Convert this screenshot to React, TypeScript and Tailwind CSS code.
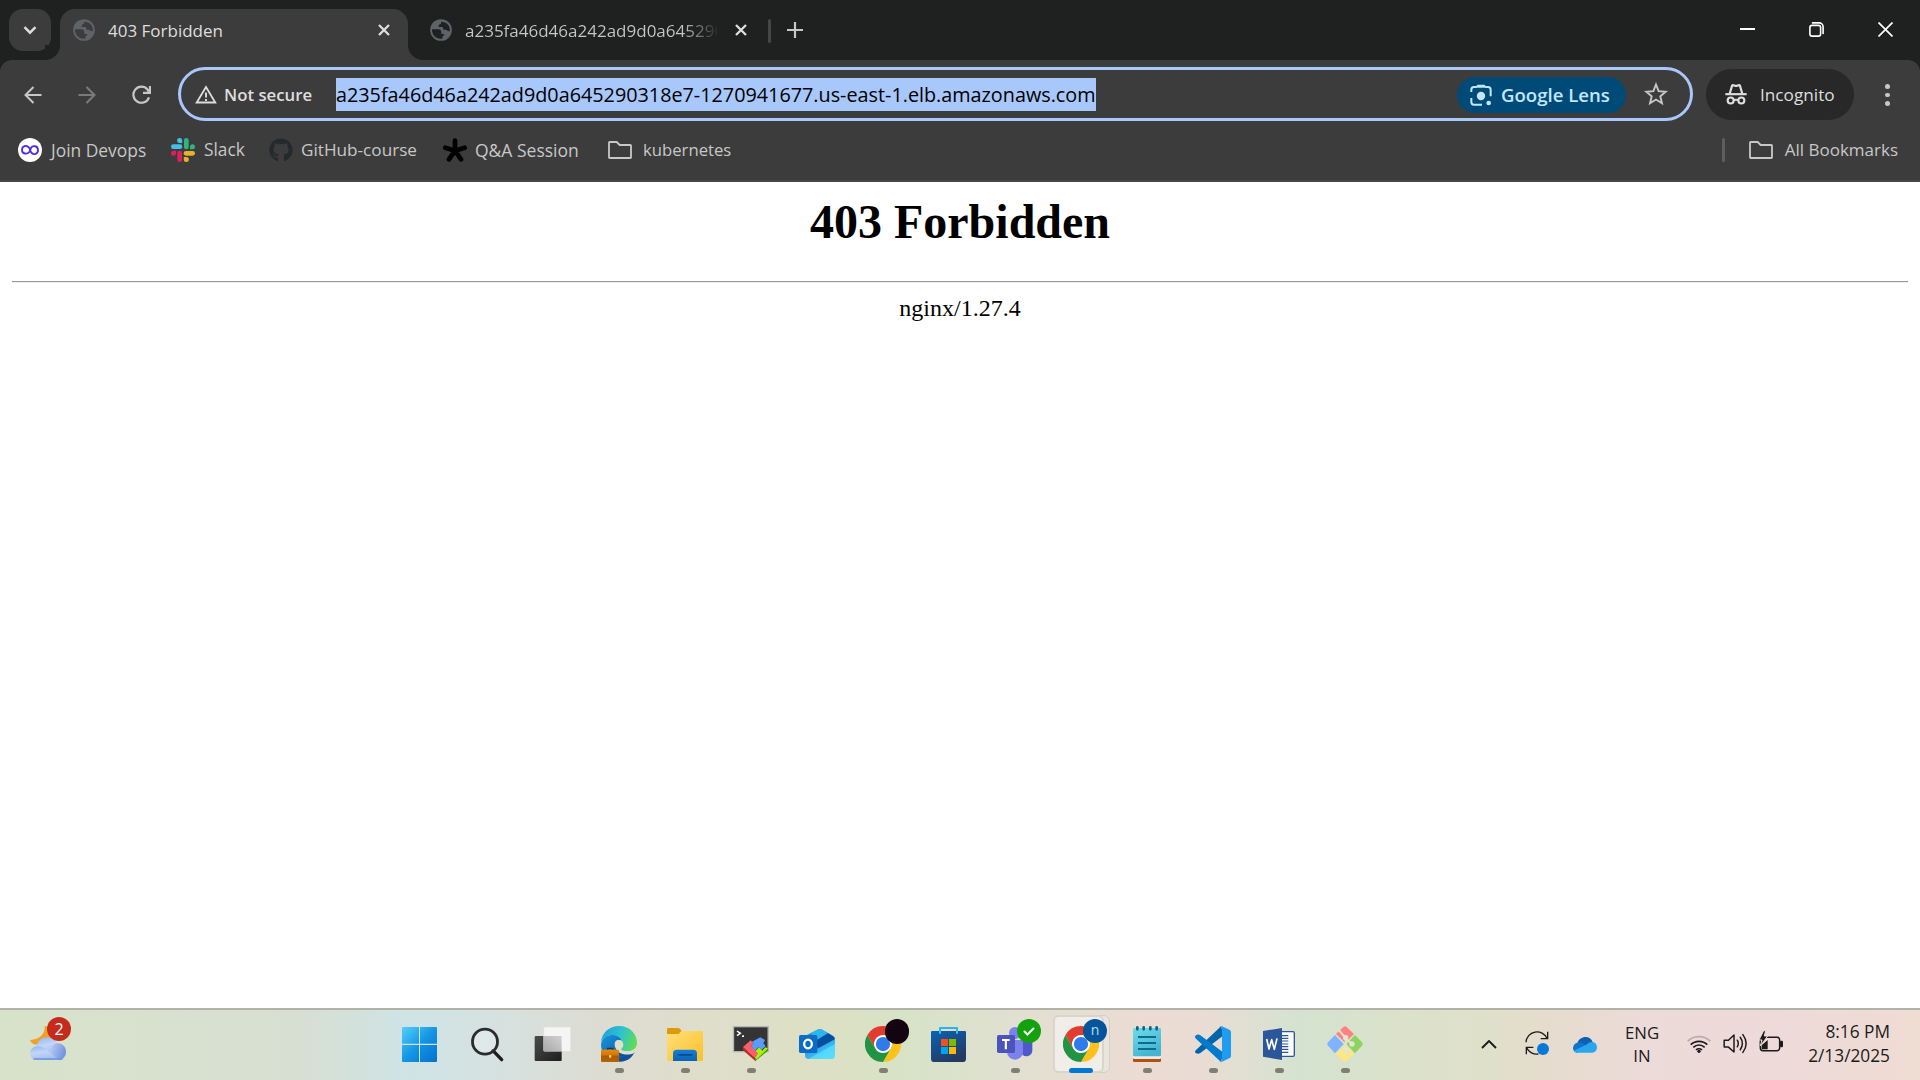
import type { ReactNode } from "react";
import { FaGithub } from "react-icons/fa";

function Chrome() {
  return (
    <svg viewBox="0 0 48 48" className="size-9">
      <circle cx="24" cy="24" r="12" fill="#fff" />
      <path fill="#e33b2e" d="M24,12H44.7812a23.9939,23.9939,0,0,0-41.5639.0029L13.6079,30l.0093-.0024A11.9852,11.9852,0,0,1,24,12Z" />
      <path fill="#fcc21b" d="M34.3913,30.0029,24.0007,48A23.994,23.994,0,0,0,44.78,12.0031H23.9989l-.0025.0093A11.985,11.985,0,0,1,34.3913,30.0029Z" />
      <path fill="#229342" d="M13.6086,30.0031,3.218,12.006A23.994,23.994,0,0,0,24.0025,48L34.3931,30.0029l-.0067-.0068a11.9852,11.9852,0,0,1-20.7778.007Z" />
      <circle cx="24" cy="24" r="9.5" fill="#2f7bea" />
    </svg>
  );
}

function Art({ children }: { children: ReactNode }) {
  return (
    <svg viewBox="0 0 108 108" className="size-9 overflow-visible">
      {children}
    </svg>
  );
}

function TaskButton({ children, running, active }: { children: ReactNode; running?: boolean; active?: boolean }) {
  return (
    <div className="relative flex h-full w-[66px] shrink-0 justify-center pt-4">
      {active && (
        <>
          <div className="absolute left-[5px] top-[5px] h-[58px] w-[57px] rounded-md border border-[#d5cfc6] bg-[#e9e4dc]" />
          <div className="absolute left-[5px] top-[5px] h-[58px] w-[51px] rounded-md border-2 border-[#d9d5cc] bg-[#f1eeea]" />
        </>
      )}
      <div className="relative size-9">{children}</div>
      {running && !active && <div className="absolute top-[58px] h-[5px] w-[9px] rounded-full bg-[#807f74]" />}
      {active && <div className="absolute top-[58px] h-[5px] w-6 rounded-full bg-[#0078d4]" />}
    </div>
  );
}

function StartIcon() {
  return (
    <Art>
      <defs>
        <linearGradient id="win" gradientUnits="userSpaceOnUse" x1="-3" y1="3" x2="102" y2="108">
          <stop offset="0" stopColor="#52d0fb" />
          <stop offset="0.5" stopColor="#1595e4" />
          <stop offset="1" stopColor="#0470cf" />
        </linearGradient>
      </defs>
      <path fill="url(#win)" d="M0 3h48v50H-3V6a3 3 0 0 1 3-3zM51 3h48a3 3 0 0 1 3 3v47H51zM-3 57h51v51H0a3 3 0 0 1-3-3zM51 57h51v48a3 3 0 0 1-3 3H51z" />
    </Art>
  );
}

function SearchIcon() {
  return (
    <Art>
      <path d="M72 74 L98 101" stroke="#1c1c1c" strokeWidth="10" strokeLinecap="round" />
      <circle cx="48" cy="47" r="37.5" fill="#ffffff" fillOpacity="0.25" stroke="#2b2b2b" strokeWidth="8.5" />
    </Art>
  );
}

function TaskViewIcon() {
  return (
    <Art>
      <defs>
        <linearGradient id="tvd" x1="0" y1="0" x2="1" y2="1">
          <stop offset="0" stopColor="#4c4c4c" />
          <stop offset="1" stopColor="#1d1d1d" />
        </linearGradient>
        <linearGradient id="tvl" x1="0" y1="1" x2="1" y2="0">
          <stop offset="0" stopColor="#a9a9a9" />
          <stop offset="1" stopColor="#d2d2d2" />
        </linearGradient>
      </defs>
      <rect x="-1" y="30" width="81" height="75" rx="3" fill="url(#tvd)" />
      <rect x="26" y="3" width="81" height="73" rx="3" fill="#f5f5f5" stroke="#dcdcdc" strokeWidth="1.5" />
      <rect x="26" y="30" width="54" height="45" fill="url(#tvl)" />
    </Art>
  );
}

function EdgeIcon() {
  return (
    <Art>
      <defs>
        <linearGradient id="e1" x1="0" y1="0.3" x2="1" y2="0.6">
          <stop offset="0" stopColor="#1fa0dc" />
          <stop offset="0.5" stopColor="#2cc3cf" />
          <stop offset="1" stopColor="#62dc55" />
        </linearGradient>
        <linearGradient id="e2" x1="0" y1="0" x2="0.8" y2="1">
          <stop offset="0" stopColor="#1a96dd" />
          <stop offset="1" stopColor="#0b58ac" />
        </linearGradient>
        <linearGradient id="e3" x1="0" y1="0" x2="0" y2="1">
          <stop offset="0" stopColor="#e78c0b" />
          <stop offset="0.45" stopColor="#d27605" />
          <stop offset="0.5" stopColor="#a95a03" />
          <stop offset="1" stopColor="#b76406" />
        </linearGradient>
      </defs>
      <path fill="#10509b" d="M54 107C36 104 24 88 30 66L48 60C51 76 73 86 101 78C95 93 77 109 54 107Z" />
      <path fill="url(#e2)" d="M0 55C2 38 16 26 34 26C52 26 63 36 62 44C48 38 40 50 42 62C44 80 54 90 70 90L40 107C16 100 0 82 0 55Z" />
      <path fill="#e0dfcf" d="M41 56C40 47 46 41 54 42C62 43 68 49 67 57C66 63 60 65 62 69C68 77 86 77 101 76L100 81C78 91 44 86 41 56Z" />
      <path fill="url(#e1)" d="M0 50C2 20 25 0 54 0C88 0 108 25 108 50C108 66 96 75 80 75C67 75 59 73 61 68C67 64 68 58 66 51C61 34 45 26 32 27C16 28 4 38 0 50Z" />
      <path d="M20 71V67h15v4" fill="none" stroke="#4b2c06" strokeWidth="4" />
      <rect x="0" y="71" width="54" height="37" rx="3" fill="url(#e3)" />
      <rect x="24" y="87" width="7" height="8" rx="2" fill="#ffd23c" />
    </Art>
  );
}

function ExplorerIcon() {
  return (
    <Art>
      <defs>
        <linearGradient id="f1" x1="0" y1="0" x2="1" y2="1">
          <stop offset="0" stopColor="#ffdf7a" />
          <stop offset="1" stopColor="#fbc02a" />
        </linearGradient>
        <linearGradient id="f2" x1="0" y1="0" x2="0" y2="1">
          <stop offset="0" stopColor="#127fdc" />
          <stop offset="1" stopColor="#0b64b4" />
        </linearGradient>
      </defs>
      <path fill="#dc9c08" d="M0 9a3 3 0 0 1 3-3h30c4 0 6 2 11 9l-6 12H0z" />
      <path fill="url(#f1)" d="M0 24h34c4 0 6-9 11-9h60a3 3 0 0 1 3 3v84a3 3 0 0 1-3 3H3a3 3 0 0 1-3-3z" />
      <path fill="url(#f2)" d="M18 105V82a11 11 0 0 1 11-11h50a11 11 0 0 1 11 11v23z" />
      <rect x="32" y="84" width="45" height="5" rx="2.5" fill="#0a4a8c" />
    </Art>
  );
}

function TerminalIcon() {
  return (
    <Art>
      <rect x="1.5" y="2" width="104" height="75" fill="#343434" stroke="#b4b7ba" strokeWidth="4" />
      <path d="M12 15l10 7-10 7" fill="none" stroke="#fff" strokeWidth="4.5" />
      <rect x="27" y="28" width="6" height="5" fill="#fff" />
      <path fill="#b8282e" d="M30 63v10l38 33v-10z" />
      <path fill="#fb5f63" d="M30 63L53 43l9 9-8 8 22 22-9 14z" />
      <path fill="#5b9bfb" d="M54 60l8-8-5-5 25-13 14 8-5 10 7 8-12 12-9-9-11 11z" />
      <path fill="#4b9a08" d="M66 95v11l39-32V64z" />
      <path fill="#a4f40a" d="M66 95l11-12-9-9 10-10 10 10 9-10 8 3-34 33z" />
    </Art>
  );
}

function OutlookIcon() {
  return (
    <Art>
      <defs>
        <linearGradient id="o1" x1="0" y1="0" x2="1" y2="1">
          <stop offset="0" stopColor="#1b86dc" />
          <stop offset="1" stopColor="#4fdcff" />
        </linearGradient>
      </defs>
      <path fill="#1a8fdb" d="M18 30L58 10a10 10 0 0 1 9 0L104 31v40H18z" />
      <path fill="#2db6ee" d="M36 21L58 10a10 10 0 0 1 9 0l19 11-33 21z" />
      <path fill="#0a4ea0" d="M50 44L88 22l17 11c4 3 3 8 0 10L58 73z" />
      <path fill="url(#o1)" d="M18 54l28 19L108 40v48a11 11 0 0 1-11 11H29a11 11 0 0 1-11-11z" />
      <path fill="#5fe1fd" fillOpacity="0.7" d="M28 99L108 54v34a11 11 0 0 1-11 11z" />
      <rect x="0" y="27" width="55" height="54" rx="5" fill="#0a6cc7" />
      <ellipse cx="27" cy="54" rx="11.5" ry="13" fill="none" stroke="#fff" strokeWidth="7" />
    </Art>
  );
}

function StoreIcon() {
  return (
    <Art>
      <defs>
        <linearGradient id="s1" x1="0" y1="0" x2="0.5" y2="1">
          <stop offset="0" stopColor="#0a63b5" />
          <stop offset="1" stopColor="#243a63" />
        </linearGradient>
      </defs>
      <path d="M27 22V6h51v16" fill="none" stroke="#27b4f2" strokeWidth="6" strokeLinejoin="round" />
      <path fill="url(#s1)" d="M3 15h99a3 3 0 0 1 3 3v80a10 10 0 0 1-10 10H10A10 10 0 0 1 0 98V18a3 3 0 0 1 3-3z" />
      <path d="M27 15v8M78 15v8" stroke="#35c3fa" strokeWidth="6" />
      <rect x="30" y="39" width="21" height="21" fill="#f25022" />
      <rect x="54" y="39" width="21" height="21" fill="#7fba00" />
      <rect x="30" y="63" width="21" height="21" fill="#00a4ef" />
      <rect x="54" y="63" width="21" height="21" fill="#ffb900" />
    </Art>
  );
}

function TeamsIcon() {
  return (
    <Art>
      <circle cx="86" cy="30" r="15" fill="#5059c9" />
      <path fill="#5059c9" d="M66 42h36a4 4 0 0 1 4 4v26a18 18 0 0 1-30 14z" />
      <circle cx="54" cy="21" r="18" fill="#7b83eb" />
      <path fill="#7b83eb" d="M30 42h43a5 5 0 0 1 5 5v30a24 24 0 0 1-48 0z" />
      <rect x="0" y="27" width="54" height="54" rx="5" fill="#4b53bc" />
      <path d="M15 42h23M26.5 42v28" stroke="#fff" strokeWidth="6.5" />
    </Art>
  );
}

function NotepadIcon() {
  return (
    <Art>
      <defs>
        <linearGradient id="n1" x1="0" y1="0" x2="0.5" y2="1">
          <stop offset="0" stopColor="#6fdcec" />
          <stop offset="1" stopColor="#44b4cf" />
        </linearGradient>
      </defs>
      <rect x="12" y="90" width="84" height="18" rx="4" fill="#b5500c" />
      <rect x="12" y="82" width="84" height="17" rx="4" fill="#eee9ea" />
      <rect x="12" y="6" width="84" height="85" rx="4" fill="url(#n1)" />
      <path d="M27 33h54M27 51h54M27 69h54" stroke="#0f6a8b" strokeWidth="5.5" />
      <path d="M25 4v6M44 4v6M64 4v6M83 4v6" stroke="#0e6486" strokeWidth="8" strokeLinecap="round" />
    </Art>
  );
}

function VSCodeIcon() {
  return (
    <Art>
      <path fill="#0065a9" d="M3 82c-4-3-4-6 0-10L78 1l8 27L16 81c-4 3-8 3-13 1z" />
      <path fill="#007acc" d="M3 28c-4 3-4 6 0 10l75 70 8-28L16 28c-4-3-8-3-13 0z" />
      <path fill="#1f9cf0" d="M81 107c-3 1-6 0-8-2 3 3 8 1 8-3V6c0-4-5-6-8-3 2-3 5-4 8-2l22 10c3 2 5 4 5 8v70c0 4-2 6-5 8z" />
    </Art>
  );
}

function WordIcon() {
  return (
    <Art>
      <rect x="50" y="17" width="50" height="74" rx="4" fill="#fff" stroke="#2b579a" strokeWidth="4" />
      <path d="M56 29h26M56 37h26M56 45h26M56 54h26M56 62h26M56 70h26M56 79h26" stroke="#2b579a" strokeWidth="3.5" />
      <path fill="#2b579a" d="M6 15L63 6v96L6 92z" />
      <path fill="none" stroke="#fff" strokeWidth="5" strokeLinejoin="round" d="M17 39l7 30 8-28 8 29 8-33" />
    </Art>
  );
}

function GitIcon() {
  return (
    <Art>
      <path fill="#ff8080" d="M49 3a7 7 0 0 1 10 0l22 21-27 26-27-26z" />
      <path fill="#80b3ff" d="M3 49L24 27l26 27-26 28L3 59a7 7 0 0 1 0-10z" />
      <path fill="#8dd35f" d="M105 49L84 27 58 54l26 28 21-23a7 7 0 0 0 0-10z" />
      <path fill="#ffe680" d="M49 105a7 7 0 0 0 10 0l22-21-27-26-27 26z" />
      <g stroke="#e3e5cf" fill="#e3e5cf" strokeWidth="6">
        <path d="M36 13l20 23M56 34v42M58 40l17 13" />
        <circle cx="56" cy="35" r="5" />
        <circle cx="56" cy="77" r="5" />
        <circle cx="75" cy="54" r="5" />
      </g>
    </Art>
  );
}

function WeatherIcon() {
  return (
    <svg viewBox="0 0 108 105" className="h-[35px] w-9">
      <defs>
        <linearGradient id="w1" x1="0" y1="0" x2="0.3" y2="1">
          <stop offset="0" stopColor="#8fb4f2" />
          <stop offset="0.5" stopColor="#c3d6f7" />
          <stop offset="1" stopColor="#a3c0f2" />
        </linearGradient>
        <linearGradient id="w2" x1="0" y1="0" x2="1" y2="0.3">
          <stop offset="0" stopColor="#cfdcf6" />
          <stop offset="1" stopColor="#7296de" />
        </linearGradient>
      </defs>
      <path fill="#f0a022" d="M44 0C46 20 34 40 0 42C4 54 16 58 28 56L64 40L56 8C52 2 48 0 44 0Z" />
      <path fill="url(#w1)" d="M20 62C22 44 36 34 52 34C68 34 80 44 84 60L70 90H30Z" />
      <path fill="url(#w2)" d="M62 70C66 56 76 52 84 52C98 52 108 63 108 77C108 92 98 102 84 102H50Z" />
      <path fill="url(#w1)" d="M0 82C0 70 10 61 22 61C36 61 42 66 54 74L86 102H21C9 102 0 94 0 82Z" />
      <path d="M12 99h84" stroke="#6f92de" strokeWidth="5" strokeLinecap="round" />
    </svg>
  );
}

function DevopsIcon() {
  return (
    <svg viewBox="0 0 72 72" className="size-6">
      <circle cx="36" cy="36" r="36" fill="#fff" />
      <path d="M29 26c-3-4-17-3-17 10s16 13 22 6l5-12c5-9 21-7 21 6s-13 14-18 10M29 26c9 1 6 20 15 20" fill="none" stroke="#4b2bf0" strokeWidth="5.5" strokeLinecap="round" />
    </svg>
  );
}

function SlackIcon() {
  return (
    <svg viewBox="0 0 72 72" className="size-6">
      <g fill="#45bfe6">
        <rect x="0" y="19" width="34" height="14" rx="7" />
        <path d="M26 0a7.5 7.5 0 0 1 7.5 7.5V15H26a7.5 7.5 0 0 1 0-15z" />
      </g>
      <g fill="#2eb67d">
        <rect x="39" y="0" width="14" height="34" rx="7" />
        <path d="M72 26a7.5 7.5 0 0 1-7.5 7.5H57V26a7.5 7.5 0 0 1 15 0z" />
      </g>
      <g fill="#e9b02e">
        <rect x="38" y="39" width="34" height="14" rx="7" />
        <path d="M46 72a7.5 7.5 0 0 1-7.5-7.5V57H46a7.5 7.5 0 0 1 0 15z" />
      </g>
      <g fill="#e01e5a">
        <rect x="19" y="38" width="14" height="34" rx="7" />
        <path d="M0 46a7.5 7.5 0 0 1 7.5-7.5H15V46a7.5 7.5 0 0 1-15 0z" />
      </g>
    </svg>
  );
}

function AsteriskIcon() {
  return (
    <svg viewBox="0 0 72 72" className="size-6">
      <path d="M36 40V8M36 38L7 29M36 38L65 29M36 38L18 64M36 38L54 64" stroke="#000" strokeWidth="14" strokeLinecap="round" />
    </svg>
  );
}

function FolderIcon() {
  return (
    <svg viewBox="0 0 72 54" className="h-[18px] w-6">
      <path d="M3 5a2 2 0 0 1 2-2h21l9 9h32a2 2 0 0 1 2 2v35a2 2 0 0 1-2 2H5a2 2 0 0 1-2-2z" fill="none" stroke="#c7c7c7" strokeWidth="5.5" />
    </svg>
  );
}

function Globe() {
  return (
    <svg viewBox="-6 -6 78 78" className="size-[26px] shrink-0">
      <circle cx="33" cy="33" r="32.5" fill="#5f6368" />
      <path d="M6 31h20c5 0 8 4 8 8v6h9c-1 6-5 6-6 10v4C20 62 5 49 6 31z" fill="currentColor" />
      <path d="M33 8v6c-5 1-8 4-7 10h10c3 0 4 3 4 8h8c4 0 4 5 8 5h3C62 20 50 8 33 8z" fill="currentColor" />
    </svg>
  );
}

function CloseX() {
  return (
    <svg viewBox="0 0 12 12" className="size-3 shrink-0">
      <path d="M1 1l10 10M11 1L1 11" stroke="#dedede" strokeWidth="2.3" />
    </svg>
  );
}

function TabStrip() {
  return (
    <div className="flex h-[60px] items-start bg-[#1f2120] pl-[9px] pt-[9px]">
      <div className="flex size-[42px] items-center justify-center rounded-[14px] bg-[#3c3c3c]">
        <svg viewBox="0 0 14 9" className="h-[9px] w-3.5">
          <path d="M1.5 1.2L7 6.7l5.5-5.5" fill="none" stroke="#dedede" strokeWidth="2.4" />
        </svg>
      </div>
      <div className="relative ml-[9px] flex h-[51px] w-[348px] items-center rounded-t-[15px] bg-[#3c3c3c] pb-[9px] pl-[11px] pr-[18px] text-[#3c3c3c]">
        <div className="absolute -left-[15px] bottom-0 size-[15px] bg-[radial-gradient(circle_at_0_0,#1f2120_14.5px,#3c3c3c_15.5px)]" />
        <div className="absolute -right-[15px] bottom-0 size-[15px] bg-[radial-gradient(circle_at_100%_0,#1f2120_14.5px,#3c3c3c_15.5px)]" />
        <Globe />
        <span className="ml-[11px] flex-1 whitespace-nowrap pt-0.5 text-[17px] leading-6 text-[#dedede]">403 Forbidden</span>
        <CloseX />
      </div>
      <div className="flex h-[42px] w-[339px] items-center pl-5 text-[#1f2120]">
        <Globe />
        <span className="ml-[11px] w-[252px] overflow-hidden whitespace-nowrap bg-[linear-gradient(to_right,#c7c7c7_86%,transparent_101%)] bg-clip-text pt-0.5 text-[17px] leading-6 text-transparent">
          a235fa46d46a242ad9d0a645290318e7
        </span>
        <span className="ml-[18px]">
          <CloseX />
        </span>
      </div>
      <div className="ml-[21px] mt-[10px] h-6 w-[3px] rounded-full bg-[#464646]" />
      <svg viewBox="0 0 16 16" className="ml-4 mt-[13px] size-4">
        <path d="M8 0v16M0 8h16" stroke="#c7c7c7" strokeWidth="2.2" />
      </svg>
      <div className="ml-auto mr-[27px] mt-[13px] flex w-[153px] items-center justify-between text-white">
        <div className="mb-px h-0.5 w-[15px] bg-white" />
        <svg viewBox="0 0 15 15" className="size-[15px]">
          <rect x="0.9" y="3.4" width="10.7" height="10.7" rx="2.2" fill="none" stroke="#fff" strokeWidth="1.6" />
          <path d="M3.5 .9h6.6a4 4 0 0 1 4 4v6.6" fill="none" stroke="#fff" strokeWidth="1.6" strokeLinecap="round" />
        </svg>
        <svg viewBox="0 0 15 15" className="size-[15px]">
          <path d="M.5.5l14 14M14.5.5l-14 14" stroke="#fff" strokeWidth="1.7" />
        </svg>
      </div>
    </div>
  );
}

function Toolbar() {
  return (
    <div className="flex h-[68px] items-start">
      <svg viewBox="0 0 18 18" className="ml-6 mt-[26px] size-[18px]">
        <path d="M17.5 9H2M9.5 1L1.5 9l8 8" fill="none" stroke="#c7c7c7" strokeWidth="2" />
      </svg>
      <svg viewBox="0 0 18 18" className="ml-9 mt-[26px] size-[18px]">
        <path d="M.5 9H16M8.500 1l8 8-8 8" fill="none" stroke="#7b7b7b" strokeWidth="2" />
      </svg>
      <svg viewBox="0 0 19 19" className="ml-9 mt-[25px] size-[19px]">
        <path d="M17 12.3A8 8 0 1 1 15.500 4.5L17 6.5M18 1v6.9h-7" fill="none" stroke="#c7c7c7" strokeWidth="2.2" />
      </svg>
      <div className="ml-[27px] mt-[7px] flex h-[54px] w-[1515px] items-center rounded-full border-[3px] border-[#a8c7fa] pl-[14px]">
        <svg viewBox="0 0 22 19" className="h-[19px] w-[22px]">
          <path d="M11 2L1.7 17.5h18.6z" fill="none" stroke="#dedede" strokeWidth="1.8" />
          <path d="M11 7.5v5M11 14v2" stroke="#dedede" strokeWidth="1.9" />
        </svg>
        <span className="ml-[7px] w-28 whitespace-nowrap pt-px text-[16.8px] font-semibold leading-6 text-[#dedede]">Not secure</span>
        <span className="flex h-[33px] w-[760px] items-center whitespace-nowrap bg-[#a8c7fa] pt-px text-[19.79px] text-black">
          a235fa46d46a242ad9d0a645290318e7-1270941677.us-east-1.elb.amazonaws.com
        </span>
        <div className="ml-[361px] mt-px flex h-9 w-[169px] items-center rounded-full bg-[#004a77] pl-[13px] text-[#c2e7ff]">
          <svg viewBox="0 0 66 66" className="size-[22px]">
            <path d="M4 24V17a8 8 0 0 1 8-8h8M46 9h8a8 8 0 0 1 8 8v20M4 42v12a8 8 0 0 0 8 8h24" fill="none" stroke="currentColor" strokeWidth="6" />
            <path d="M16 11l6-9h22l6 9z" fill="currentColor" />
            <circle cx="33" cy="36" r="12.5" fill="currentColor" />
            <circle cx="56" cy="57" r="7" fill="currentColor" />
          </svg>
          <span className="ml-[9px] whitespace-nowrap text-[18.6px] font-semibold leading-6">Google Lens</span>
        </div>
        <svg viewBox="0 0 24 24" className="ml-[18px] size-6">
          <path d="M12 2.5l2.6 6.6 7.1.6-5.4 4.7 1.7 6.9L12 17.5l-6 3.8 1.7-6.9L2.300 9.7l7.1-.6z" fill="none" stroke="#c7c7c7" strokeWidth="1.9" />
        </svg>
      </div>
      <div className="ml-[13px] mt-[9px] flex h-[51px] w-[148px] items-center rounded-full bg-[#282828] pl-[19px] text-[#dedede]">
        <svg viewBox="0 0 66 62" className="h-[21px] w-[22px]">
          <path d="M14 29L21 5q1-3 4-2l6 2h4l6-2q3-1 4 2l7 24" fill="none" stroke="currentColor" strokeWidth="6.5" />
          <path d="M1 30h64" stroke="currentColor" strokeWidth="6.5" />
          <circle cx="17" cy="49" r="9" fill="none" stroke="currentColor" strokeWidth="6.5" />
          <circle cx="49" cy="49" r="9" fill="none" stroke="currentColor" strokeWidth="6.5" />
          <path d="M26 48q7-3 14 0" fill="none" stroke="currentColor" strokeWidth="6" />
        </svg>
        <span className="ml-[13px] text-[17.2px] leading-6">Incognito</span>
      </div>
      <div className="ml-[31px] mt-[24px] flex flex-col gap-1">
        <div className="size-[4.500px] rounded-full bg-[#c7c7c7]" />
        <div className="size-[4.500px] rounded-full bg-[#c7c7c7]" />
        <div className="size-[4.500px] rounded-full bg-[#c7c7c7]" />
      </div>
    </div>
  );
}

function Bookmarks() {
  return (
    <div className="flex h-[54px] items-center border-b-2 border-[#474747] pb-2 pl-[18px] text-[#c7c7c7]">
      <DevopsIcon />
      <span className="ml-[9px] w-[120px] whitespace-nowrap text-[17.4px] leading-6">Join Devops</span>
      <SlackIcon />
      <span className="ml-[9px] w-[65px] text-[17.3px] leading-6">Slack</span>
      <FaGithub className="size-6 text-[#24292e]" />
      <span className="ml-2 w-[142px] whitespace-nowrap text-[17.16px] leading-6">GitHub-course</span>
      <AsteriskIcon />
      <span className="ml-2 w-[133px] whitespace-nowrap text-[17.5px] leading-6">Q&amp;A Session</span>
      <FolderIcon />
      <span className="ml-[11px] text-[16.7px] leading-6">kubernetes</span>
      <div className="ml-auto h-6 w-[3px] rounded-full bg-[#5e5e5e]" />
      <span className="ml-6">
        <FolderIcon />
      </span>
      <span className="ml-3 mr-[22px] text-[17px] leading-6">All Bookmarks</span>
    </div>
  );
}

function Tray() {
  return (
    <>
      <svg viewBox="0 0 16 9" className="mb-px ml-auto h-[9px] w-4">
        <path d="M1 8l7-7 7 7" fill="none" stroke="#1b1b1b" strokeWidth="1.9" />
      </svg>
      <svg viewBox="0 0 72 72" className="mb-1 ml-7 size-6">
        <path d="M3 34A33 33 0 0 1 66 22M68 2v21H47" fill="none" stroke="#1b1b1b" strokeWidth="4" />
        <path d="M40 69A33 33 0 0 1 5 50M4 70V49h21" fill="none" stroke="#1b1b1b" strokeWidth="4" />
        <circle cx="54" cy="54" r="18" fill="#0a78d8" />
      </svg>
      <svg viewBox="0 0 72 48" className="mb-px ml-6 h-4 w-6">
        <path fill="#0f5fb4" d="M13 18C18 4 30 0 38 0c9 0 17 5 21 15L40 30z" />
        <path fill="#1173cc" d="M14 17c8-2 14 0 20 4l12 10-34 16C5 46 0 40 0 33c0-8 6-15 14-16z" />
        <path fill="#28a8ea" d="M40 23c5-5 12-9 19-8 8 1 13 8 13 16 0 9-6 16-15 16H12c-4 0-8-3-10-6l38-18z" />
      </svg>
      <div className="mb-0.5 ml-7 flex w-[34px] flex-col items-center text-[16.8px] leading-[23px] text-[#1b1b1b]">
        <span>ENG</span>
        <span>IN</span>
      </div>
      <svg viewBox="0 0 72 54" className="mb-0.5 ml-[28px] h-[18px] w-6">
        <g fill="none" strokeWidth="5">
          <path d="M2 19A48 48 0 0 1 70 19" stroke="#b9aeac" />
          <path d="M11 29A36 36 0 0 1 61 29" stroke="#1b1b1b" />
          <path d="M19 37A24 24 0 0 1 53 37" stroke="#1b1b1b" />
          <path d="M27 45A13 13 0 0 1 45 45" stroke="#1b1b1b" />
        </g>
        <circle cx="36" cy="49" r="5" fill="#1b1b1b" />
      </svg>
      <svg viewBox="0 0 72 64" className="mb-1 ml-3 h-[21px] w-6">
        <g fill="none" stroke="#1b1b1b" strokeWidth="4.500" strokeLinecap="round" strokeLinejoin="round">
          <path d="M3 22h13L33 6v52L16 43H3z" />
          <path d="M43 22q6 10 0 20M52 13q13 19 0 38M60 5q20 27 0 54" />
        </g>
      </svg>
      <svg viewBox="0 0 72 60" className="mb-1.5 ml-3 h-5 w-6 overflow-visible">
        <rect x="4" y="16" width="58" height="40" rx="8" fill="none" stroke="#1b1b1b" strokeWidth="4.500" />
        <rect x="63" y="26" width="9" height="20" rx="4" fill="#1b1b1b" />
        <path d="M8 52V40l18-16v28z" fill="#1b1b1b" />
        <path d="M14-4L0 24h9L4 42 26 12H16L20-4z" fill="#1b1b1b" stroke="#eddcd8" strokeWidth="3" />
      </svg>
      <div className="mb-[3px] ml-[25px] mr-[30px] flex w-[82px] flex-col items-end whitespace-nowrap text-[17.3px] leading-6 text-[#1b1b1b]">
        <span>8:16 PM</span>
        <span>2/13/2025</span>
      </div>
    </>
  );
}

export default function App() {
  return (
    <div className="flex h-[1080px] w-[1920px] flex-col overflow-hidden bg-white font-['Open_Sans',sans-serif]">
      <TabStrip />
      <div className="bg-[#1f2120]">
        <div className="rounded-t-xl bg-[#3c3c3c]">
          <Toolbar />
          <Bookmarks />
        </div>
      </div>
      <main className="flex-1 bg-white px-3 pt-3 text-center font-['Liberation_Serif',serif] text-black">
        <h1 className="text-[48px] font-bold leading-[55px]">403 Forbidden</h1>
        <div className="mt-8 h-0.5 border-b border-t border-b-[#eeeeee] border-t-[#9a9a9a]" />
        <p className="mt-3 text-2xl leading-[27px]">nginx/1.27.4</p>
      </main>
      <footer className="flex h-[72px] items-center border-t-2 border-[#b2b2a8] bg-[linear-gradient(90deg,#d7e2ca_0px,#d8e1d0_200px,#d7dfd2_300px,#cfe3e6_410px,#d6e1df_500px,#dddcd2_600px,#dfdecb_700px,#dde0c4_820px,#d7e3c6_900px,#dfe0d0_1000px,#ecdcd3_1140px,#eadcd4_1200px,#d4e3d0_1300px,#dbe1cb_1400px,#dfe0ca_1490px,#e5dccd_1540px,#ecdbd8_1640px,#eedad9_1780px,#efdcd3_1920px)]">
        <div className="relative mb-[3px] ml-[30px] w-[358px]">
          <WeatherIcon />
          <div className="absolute -top-[9px] left-[17px] flex size-6 items-center justify-center rounded-full bg-[#c42b1c] text-base leading-6 text-white">2</div>
        </div>
        <div className="flex h-full">
          <TaskButton><StartIcon /></TaskButton>
          <TaskButton><SearchIcon /></TaskButton>
          <TaskButton><TaskViewIcon /></TaskButton>
          <TaskButton running><EdgeIcon /></TaskButton>
          <TaskButton running><ExplorerIcon /></TaskButton>
          <TaskButton running><TerminalIcon /></TaskButton>
          <TaskButton><OutlookIcon /></TaskButton>
          <TaskButton running>
            <Chrome />
            <div className="absolute -right-2 -top-[7px] h-[25px] w-6 rounded-full bg-[#140411]" />
          </TaskButton>
          <TaskButton><StoreIcon /></TaskButton>
          <TaskButton running>
            <TeamsIcon />
            <div className="absolute -right-2 -top-[7px] flex size-6 items-center justify-center rounded-full bg-[#13a10e]">
              <svg viewBox="0 0 12 9" className="h-[9px] w-3">
                <path d="M1.5 4.500l3 3L10.500 1.5" fill="none" stroke="#fff" strokeWidth="2" strokeLinecap="round" />
              </svg>
            </div>
          </TaskButton>
          <TaskButton active>
            <Chrome />
            <div className="absolute -right-2 -top-[7px] flex size-6 items-center justify-center rounded-full bg-[#05559b] pb-0.5 text-sm leading-none text-[#b9dcf5]">n</div>
          </TaskButton>
          <TaskButton running><NotepadIcon /></TaskButton>
          <TaskButton running><VSCodeIcon /></TaskButton>
          <TaskButton running><WordIcon /></TaskButton>
          <TaskButton running><GitIcon /></TaskButton>
        </div>
        <Tray />
      </footer>
    </div>
  );
}
